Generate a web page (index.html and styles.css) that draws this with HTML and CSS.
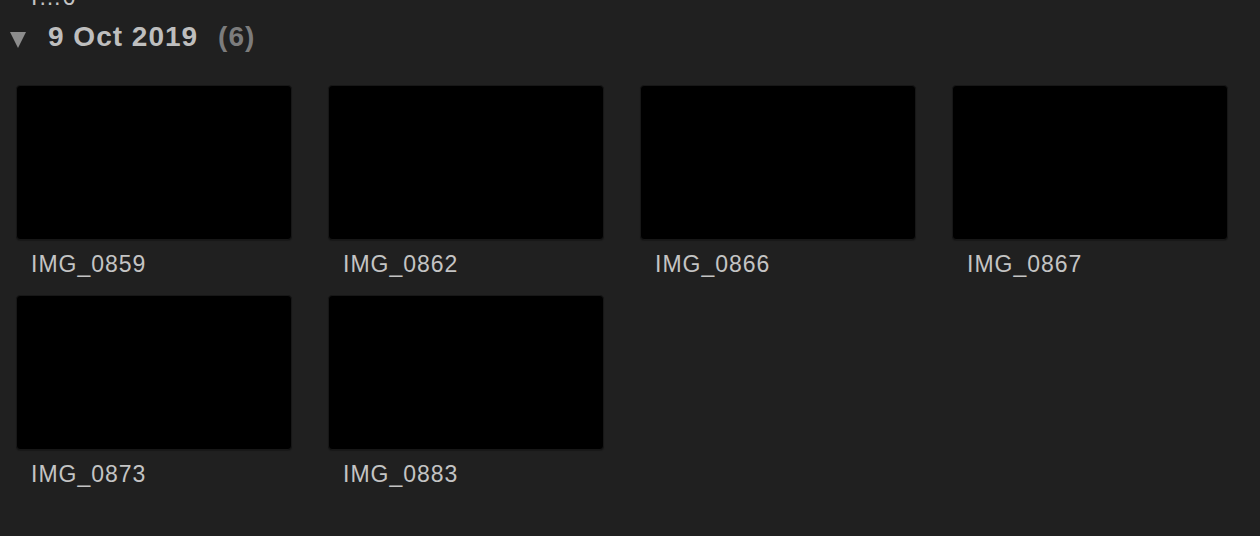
FILE: index.html
```html
<!DOCTYPE html>
<html lang="en">
<head>
    <meta charset="UTF-8">
    <title>Photos - 9 Oct 2019</title>
    <link rel="stylesheet" href="styles.css">
</head>
<body>
    <!-- label of the previous group, scrolled mostly out of view -->
    <div class="prev-label"><span>I…6</span></div>

    <section class="group">
        <header class="group-header">
            <svg class="disclosure" width="16" height="16" viewBox="0 0 16 16">
                <polygon points="0,0 16,0 8,16" fill="#8c8c8c"/>
            </svg>
            <h2 class="group-title">9 Oct 2019</h2>
            <span class="group-count">(6)</span>
        </header>

        <div class="photo-grid">
            <div class="photo"><div class="thumb"></div><p class="photo-name">IMG_0859</p></div>
            <div class="photo"><div class="thumb"></div><p class="photo-name">IMG_0862</p></div>
            <div class="photo"><div class="thumb"></div><p class="photo-name">IMG_0866</p></div>
            <div class="photo"><div class="thumb"></div><p class="photo-name">IMG_0867</p></div>
            <div class="photo"><div class="thumb"></div><p class="photo-name">IMG_0873</p></div>
            <div class="photo"><div class="thumb"></div><p class="photo-name">IMG_0883</p></div>
        </div>
    </section>
</body>
</html>
```

FILE: styles.css
```css
* { margin: 0; padding: 0; box-sizing: border-box; }
body {
    font-family: 'Liberation Sans', Arial, sans-serif;
    background-color: #202020;
    color: #c4c4c4;
    overflow: hidden;
}

/* previous group's last label, only its bottom edge shows */
.prev-label { height: 6px; overflow: hidden; padding-left: 31px; }
.prev-label span { display: block; margin-top: -17px; font-size: 23px; line-height: 28px; letter-spacing: 1px; color: #c4c4c4; }

.group-header { display: flex; align-items: center; height: 40px; margin-top: 11px; padding-left: 10px; }
.disclosure { flex-shrink: 0; margin-top: 6px; margin-right: 22px; }
.group-title { font-size: 28px; font-weight: 700; line-height: 40px; letter-spacing: 1px; color: #bebebe; }
.group-count { margin-left: 20px; font-size: 28px; font-weight: 700; letter-spacing: 1px; color: #7c7c7c; }

.photo-grid { display: grid; grid-template-columns: repeat(4, 276px); column-gap: 36px; padding: 0 16px; margin-top: 28px; }
.photo { height: 210px; }
.thumb { height: 155px; background-color: #000; border: 1px solid #171717; border-radius: 4px; box-shadow: 0 1px 1px rgba(0, 0, 0, 0.25); }
.photo-name { margin-top: 10px; padding-left: 15px; font-size: 23px; line-height: 28px; letter-spacing: 1px; color: #c4c4c4; }
```
